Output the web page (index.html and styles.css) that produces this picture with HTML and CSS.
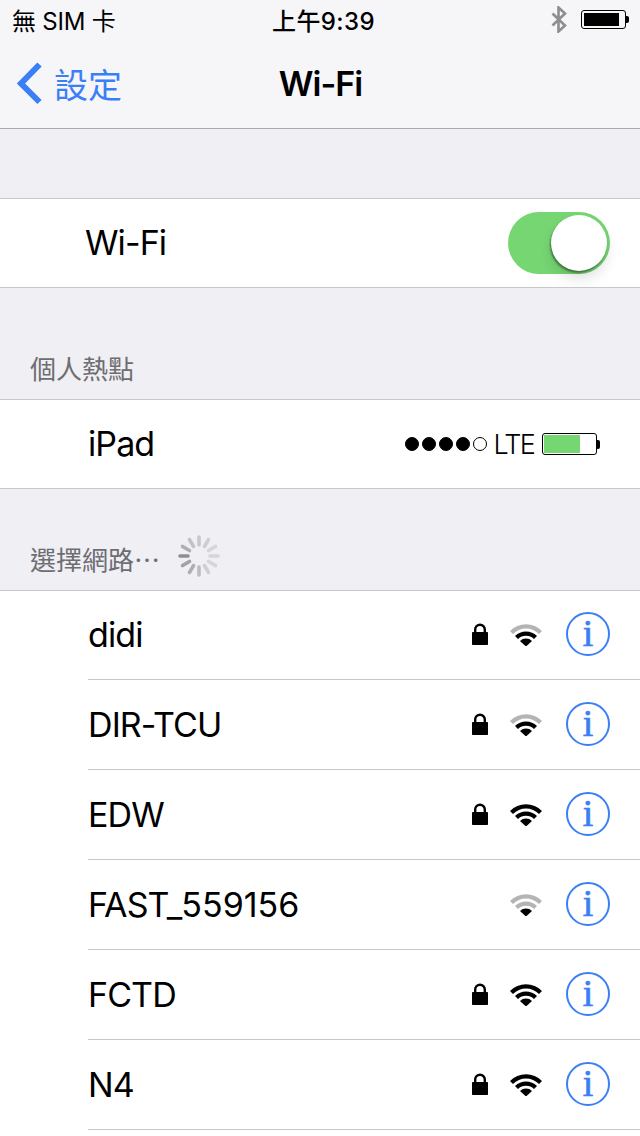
FILE: index.html
```html
<!DOCTYPE html>
<html lang="zh-Hant">
<head>
<meta charset="utf-8">
<title>Wi-Fi</title>
<link rel="stylesheet" href="styles.css">
</head>
<body>
<svg class="defs" width="0" height="0" aria-hidden="true">
  <defs>
    <symbol id="lock" viewBox="0 0 16 22">
      <path class="lock-shackle" d="M3.2 11V6.6a4.8 4.8 0 0 1 9.6 0V11"/>
      <rect x="0" y="9" width="16" height="13" rx="0.8"/>
    </symbol>
    <symbol id="wifi-arc1" viewBox="0 0 32 23">
      <path d="M0 8 A22.6 22.6 0 0 1 32 8 L29 11 A18.4 18.4 0 0 0 3 11 Z"/>
    </symbol>
    <symbol id="wifi-arc2" viewBox="0 0 32 23">
      <path d="M5 13 A15.6 15.6 0 0 1 27 13 L24 16 A11.3 11.3 0 0 0 8 16 Z"/>
    </symbol>
    <symbol id="wifi-arc3" viewBox="0 0 32 23">
      <path d="M10 18 A8.5 8.5 0 0 1 22 18 L16 23.5 Z"/>
    </symbol>
  </defs>
</svg>
<div class="page">
  <header class="top">
    <div class="status">
      <div class="carrier">無 SIM 卡</div>
      <div class="time">上午9:39</div>
      <div class="status-right">
        <svg class="bt" width="16" height="27" viewBox="0 0 16 27"><path d="M1.5 7.5 14 19.5 7.5 25.5V1.5L14 7.5 1.5 19.5"/></svg>
        <div class="battery"><div class="battery-body"><div class="battery-fill"></div></div><div class="battery-tip"></div></div>
      </div>
    </div>
    <div class="nav">
      <div class="back">
        <svg class="chevron" width="28" height="44" viewBox="0 0 28 44"><path d="M24.5 3.5 6 22.5 24.5 41"/></svg>
        <span>設定</span>
      </div>
      <div class="title">Wi-Fi</div>
      <div></div>
    </div>
  </header>

  <div class="gap-top"></div>

  <section class="group">
    <div class="solo">
      <span class="wifi-label">Wi-Fi</span>
      <div class="switch"><div class="knob"></div></div>
    </div>
  </section>

  <div class="head head-hotspot">個人熱點</div>

  <section class="group">
    <div class="solo solo-ipad">
      <span class="name">iPad</span>
      <div class="cell-info">
        <div class="dots"><i></i><i></i><i></i><i></i><i class="off"></i></div>
        <span class="lte">LTE</span>
        <div class="mini-battery"><div class="mini-body"><div class="mini-fill"></div></div><div class="mini-tip"></div></div>
      </div>
    </div>
  </section>

  <div class="head head-networks">
    <span>選擇網路⋯</span>
    <svg class="spinner" width="42" height="42" viewBox="-21 -21 42 42">
      <g>
        <line y1="-11" y2="-19" transform="rotate(0)" stroke-opacity=".3"/>
        <line y1="-11" y2="-19" transform="rotate(30)" stroke-opacity=".25"/>
        <line y1="-11" y2="-19" transform="rotate(60)" stroke-opacity=".2"/>
        <line y1="-11" y2="-19" transform="rotate(90)" stroke-opacity=".2"/>
        <line y1="-11" y2="-19" transform="rotate(120)" stroke-opacity=".2"/>
        <line y1="-11" y2="-19" transform="rotate(150)" stroke-opacity=".25"/>
        <line y1="-11" y2="-19" transform="rotate(180)" stroke-opacity=".4"/>
        <line y1="-11" y2="-19" transform="rotate(210)" stroke-opacity=".5"/>
        <line y1="-11" y2="-19" transform="rotate(240)" stroke-opacity=".6"/>
        <line y1="-11" y2="-19" transform="rotate(270)" stroke-opacity=".75"/>
        <line y1="-11" y2="-19" transform="rotate(300)" stroke-opacity=".5"/>
        <line y1="-11" y2="-19" transform="rotate(330)" stroke-opacity=".35"/>
      </g>
    </svg>
  </div>

  <section class="group list">
    <div class="net">
      <span class="name">didi</span>
      <svg class="lock" width="16" height="22"><use href="#lock"/></svg>
      <svg class="wifi" width="32" height="23"><use class="dim" href="#wifi-arc1"/><use href="#wifi-arc2"/><use href="#wifi-arc3"/></svg>
      <div class="info">i</div>
    </div>
    <div class="net">
      <span class="name">DIR-TCU</span>
      <svg class="lock" width="16" height="22"><use href="#lock"/></svg>
      <svg class="wifi" width="32" height="23"><use class="dim" href="#wifi-arc1"/><use href="#wifi-arc2"/><use href="#wifi-arc3"/></svg>
      <div class="info">i</div>
    </div>
    <div class="net">
      <span class="name">EDW</span>
      <svg class="lock" width="16" height="22"><use href="#lock"/></svg>
      <svg class="wifi" width="32" height="23"><use href="#wifi-arc1"/><use href="#wifi-arc2"/><use href="#wifi-arc3"/></svg>
      <div class="info">i</div>
    </div>
    <div class="net">
      <span class="name">FAST_<span class="digits">559156</span></span>
      <svg class="wifi" width="32" height="23"><use class="dim" href="#wifi-arc1"/><use class="dim" href="#wifi-arc2"/><use href="#wifi-arc3"/></svg>
      <div class="info">i</div>
    </div>
    <div class="net">
      <span class="name">FCTD</span>
      <svg class="lock" width="16" height="22"><use href="#lock"/></svg>
      <svg class="wifi" width="32" height="23"><use href="#wifi-arc1"/><use href="#wifi-arc2"/><use href="#wifi-arc3"/></svg>
      <div class="info">i</div>
    </div>
    <div class="net">
      <span class="name">N4</span>
      <svg class="lock" width="16" height="22"><use href="#lock"/></svg>
      <svg class="wifi" width="32" height="23"><use href="#wifi-arc1"/><use href="#wifi-arc2"/><use href="#wifi-arc3"/></svg>
      <div class="info">i</div>
    </div>
  </section>
</div>
</body>
</html>
```
FILE: styles.css
```css
* { box-sizing: border-box; }
html, body { margin: 0; padding: 0; }
body {
  width: 640px;
  height: 1136px;
  overflow: hidden;
  background: #efeff4;
  color: #000;
  font-family: Inter, "Noto Sans CJK TC", sans-serif;
}
.defs { display: block; height: 0; }
.page { display: flex; flex-direction: column; height: 1136px; }

.top { background: #f6f6f9; border-bottom: 1px solid #a9a9ac; height: 129px; flex: none; }
.status {
  height: 40px;
  display: grid;
  grid-template-columns: 1fr auto 1fr;
  align-items: center;
  padding: 0 11px 2px 12px;
  font-size: 24px;
}
.carrier { font-size: 24px; letter-spacing: -0.2px; }
.time { margin-left: 6px; font-weight: 500; letter-spacing: 0.4px; }
.status-right { display: flex; justify-content: flex-end; align-items: center; gap: 13px; }
.bt { fill: none; stroke: #8e8e8e; stroke-width: 2.6; margin-right: 1px; }
.battery { display: flex; align-items: center; }
.battery-body { width: 45px; height: 19px; border: 1px solid #000; border-radius: 3px; padding: 2px; }
.battery-fill { width: 35px; height: 100%; background: #000; }
.battery-tip { width: 3px; height: 7px; background: #000; border-radius: 0 2px 2px 0; }

.nav {
  height: 88px;
  display: grid;
  grid-template-columns: 1fr auto 1fr;
  align-items: center;
  padding-bottom: 2px;
}
.back { display: flex; align-items: center; color: #3a7ff6; font-size: 34px; padding-left: 15px; gap: 11px; }
.chevron { fill: none; stroke: #3a7ff6; stroke-width: 6; }
.title { font-size: 34px; font-weight: 600; letter-spacing: -1px; margin-left: 1px; }

.gap-top { height: 69px; flex: none; }
.group { background: #fff; border-top: 1px solid #c8c7cc; border-bottom: 1px solid #c8c7cc; flex: none; }
.solo { height: 88px; display: flex; align-items: center; justify-content: space-between; padding: 0 30px 0 85px; }
.solo-ipad { padding: 0 40px 0 88px; }
.wifi-label, .name {
  font-size: 34px;
  letter-spacing: -0.9px;
  padding-bottom: 2px;
}
.digits { letter-spacing: 0; }

.switch {
  width: 102px;
  height: 62px;
  border-radius: 31px;
  background: #76d672;
  display: flex;
  justify-content: flex-end;
  align-items: center;
  padding-right: 3px;
}
.knob {
  width: 56px;
  height: 56px;
  border-radius: 50%;
  background: #fff;
  box-shadow: -1px 2px 2px rgba(0, 0, 0, .4), 0 8px 14px rgba(0, 0, 0, .12);
}

.cell-info { display: flex; align-items: center; }
.dots { display: flex; gap: 3px; }
.dots i { width: 14px; height: 14px; border-radius: 50%; background: #000; border: 1px solid #000; }
.dots i.off { background: #fff; }
.lte { font-size: 27px; font-weight: 300; letter-spacing: -1.8px; margin-left: 7px; }
.mini-battery { display: flex; align-items: center; margin-left: 8px; }
.mini-body { width: 55px; height: 22px; border: 1px solid #000; border-radius: 3px; padding: 1px; }
.mini-fill { width: 36px; height: 100%; background: #76d672; }
.mini-tip { width: 3px; height: 9px; background: #000; border-radius: 0 2px 2px 0; }

.head { flex: none; display: flex; align-items: flex-end; padding-left: 30px; color: #6d6d72; font-size: 26px; }
.head-hotspot { height: 111px; padding-bottom: 13px; }
.head-networks { height: 101px; padding-bottom: 13px; }
.spinner { stroke: #6d6d72; stroke-width: 3.6; stroke-linecap: round; margin: 0 0 0 18px; }

.list { flex: 1; border-bottom: 0; }
.net {
  height: 90px;
  margin-left: 88px;
  padding: 0 30px 1px 0;
  border-bottom: 1px solid #c8c7cc;
  display: flex;
  align-items: center;
}
.net:first-child { height: 89px; padding-bottom: 2px; }
.net .name { margin-right: auto; padding-bottom: 0; }
.lock { fill: #000; margin-right: 22px; }
.lock-shackle { fill: none; stroke: #000; stroke-width: 2.4; }
.wifi { fill: #000; margin-right: 24px; }
.wifi .dim { fill: #b4b4b4; }
.info {
  width: 44px;
  height: 44px;
  border-radius: 50%;
  border: 2px solid #3a7ff6;
  color: #3a7ff6;
  font-family: "Liberation Serif", serif;
  font-size: 38px;
  line-height: 38px;
  text-align: center;
  -webkit-text-stroke: 0.7px #3a7ff6;
}
```
